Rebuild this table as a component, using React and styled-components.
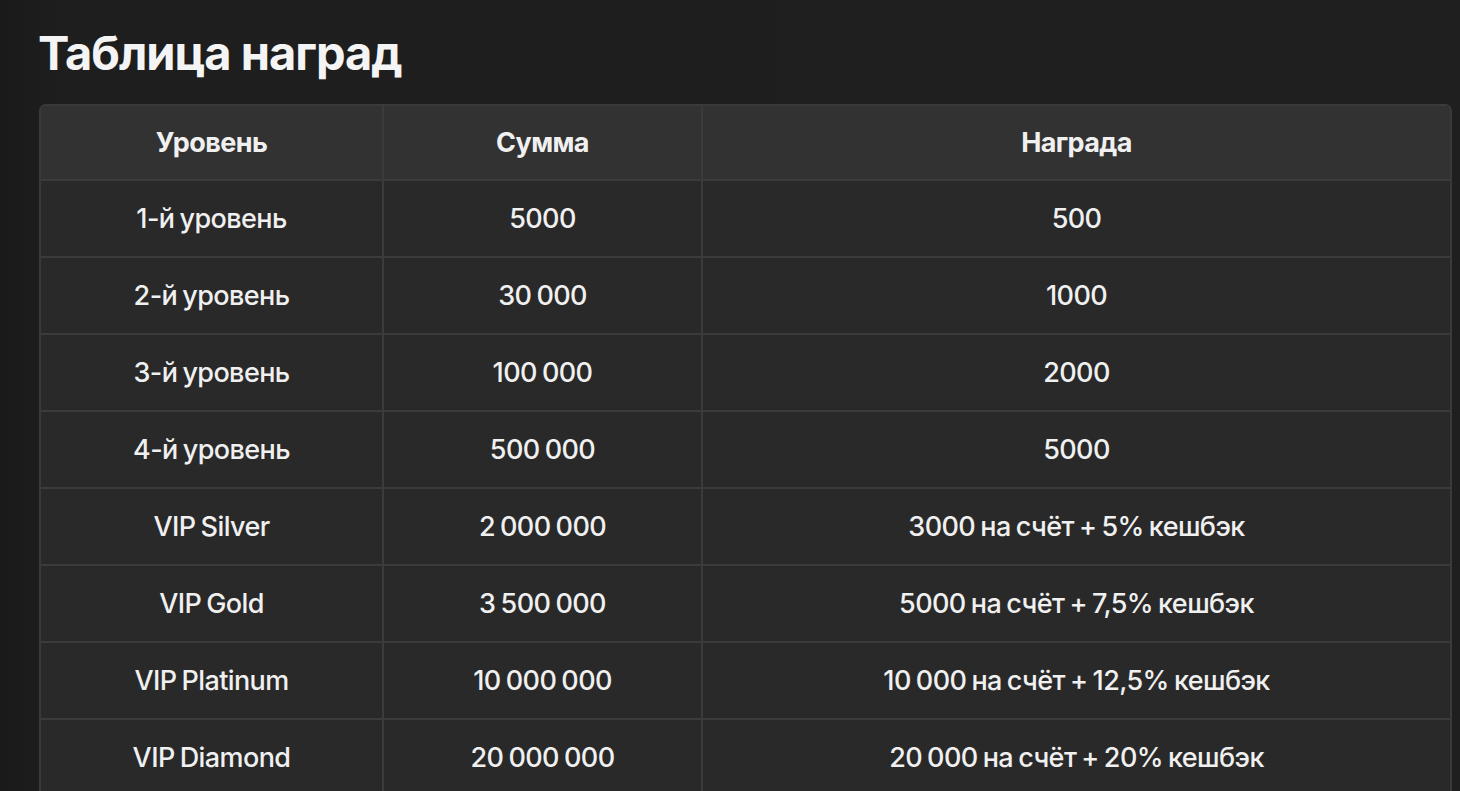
import React from "react";
import styled, { createGlobalStyle } from "styled-components";

const Global = createGlobalStyle`
  html, body { margin: 0; padding: 0; background: #1d1d1d; }
  body { font-family: Inter, "Noto Sans", sans-serif; color: #f2f2f2; }
`;

const Page = styled.div`
  width: 1460px;
  height: 791px;
  overflow: hidden;
  box-sizing: border-box;
  padding: 24px 8px 0 39px;
  background: linear-gradient(90deg, #1a1a1a 0px, #1e1e1e 60px, #1f1f1f 100%);
`;

const Title = styled.h2`
  margin: 0 0 22px -1px;
  font-size: 47px;
  line-height: 58px;
  font-weight: 700;
  letter-spacing: -1px;
  color: #f4f4f4;
`;

const Table = styled.table`
  width: 1413px;
  border-collapse: separate;
  border-spacing: 0;
  border: 2px solid #3a3a3a;
  border-radius: 7px;
  overflow: hidden;
  table-layout: fixed;
  background: #292929;
`;

const Cell = styled.td`
  height: ${(p) => (p.$head ? "75px" : "77px")};
  padding: 0;
  text-align: center;
  vertical-align: middle;
  font-size: 27px;
  font-weight: ${(p) => (p.$head ? 700 : 500)};
  letter-spacing: -0.6px;
  word-spacing: -1.5px;
  color: #f0f0f0;
  background: ${(p) => (p.$head ? "#323232" : "#292929")};
  border-right: ${(p) => (p.$last ? "none" : "2px solid #3b3b3b")};
  border-bottom: 2px solid #3b3b3b;
  box-sizing: border-box;
`;

const rows = [
  ["1-й уровень", "5000", "500"],
  ["2-й уровень", "30 000", "1000"],
  ["3-й уровень", "100 000", "2000"],
  ["4-й уровень", "500 000", "5000"],
  ["VIP Silver", "2 000 000", "3000 на счёт + 5% кешбэк"],
  ["VIP Gold", "3 500 000", "5000 на счёт + 7,5% кешбэк"],
  ["VIP Platinum", "10 000 000", "10 000 на счёт + 12,5% кешбэк"],
  ["VIP Diamond", "20 000 000", "20 000 на счёт + 20% кешбэк"],
];

export default function App() {
  return (
    <>
      <Global />
      <Page>
        <Title>Таблица наград</Title>
        <Table>
          <colgroup>
            <col style={{ width: "343px" }} />
            <col style={{ width: "319px" }} />
            <col />
          </colgroup>
          <thead>
            <tr>
              <Cell as="th" $head>Уровень</Cell>
              <Cell as="th" $head>Сумма</Cell>
              <Cell as="th" $head $last>Награда</Cell>
            </tr>
          </thead>
          <tbody>
            {rows.map((r) => (
              <tr key={r[0]}>
                <Cell>{r[0]}</Cell>
                <Cell>{r[1]}</Cell>
                <Cell $last>{r[2]}</Cell>
              </tr>
            ))}
          </tbody>
        </Table>
      </Page>
    </>
  );
}
